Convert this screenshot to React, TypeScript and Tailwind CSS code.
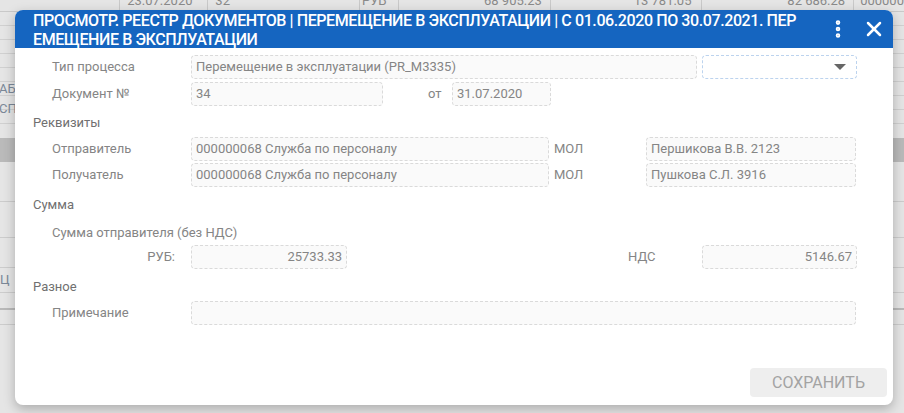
import { MoreVertical, X } from 'lucide-react';

const font = { fontFamily: 'Roboto, "Noto Sans", sans-serif' };

function Field({ w, value, right }: { w: string; value?: string; right?: boolean }) {
  return (
    <div
      className={`${w} h-[24px] shrink-0 rounded-[4px] border border-dashed border-[#dadada] bg-[#fafafa] px-[4px] flex items-center text-[13px] text-[#858585] whitespace-nowrap ${
        right ? 'justify-end' : ''
      }`}
    >
      {value}
    </div>
  );
}

function Label({ children }: { children: React.ReactNode }) {
  return <div className="w-[158px] shrink-0 pl-[19px] text-[13px] text-[#858585]">{children}</div>;
}

function Heading({ children, className = '' }: { children: React.ReactNode; className?: string }) {
  return <div className={`h-[26px] flex items-center text-[13px] text-[#707070] ${className}`}>{children}</div>;
}

function BackgroundTable() {
  const rightRows = [22, 37, 52, 66, 80, 93, 106, 119];
  return (
    <div className="w-full h-full bg-white text-[13px] text-[#9a9a9a]">
      <div className="h-[22px] -mt-[10px] flex items-center border-b border-[#e0e0e0] whitespace-nowrap">
        <div className="w-[123px] h-full border-r border-[#e0e0e0]" />
        <div className="w-[90px] h-full border-r border-[#e0e0e0] pl-[7px] flex items-center">23.07.2020</div>
        <div className="w-[155px] h-full border-r border-[#e0e0e0] pl-[7px] flex items-center">32</div>
        <div className="w-[40px] h-full border-r border-[#e0e0e0] pl-[2px] flex items-center">РУБ</div>
        <div className="w-[155px] h-full border-r border-[#e0e0e0] pr-[8px] flex items-center justify-end">68 905.23</div>
        <div className="w-[155px] h-full border-r border-[#e0e0e0] pr-[10px] flex items-center justify-end">13 781.05</div>
        <div className="w-[155px] h-full border-r border-[#e0e0e0] pr-[8px] flex items-center justify-end">82 686.28</div>
        <div className="pl-[6px] flex items-center">000000</div>
      </div>
      <div>
        {rightRows.map((y) => (
          <div key={y} className="h-[14px] border-b border-[#e8e8e8] flex items-center justify-end pr-[2px] text-[#9aa0a8]">
            <span className="w-[24px]">00</span>
          </div>
        ))}
      </div>
      <div className="h-[14px]" />
      <div className="h-[24px] bg-[#d0d0d0]" />
      <div className="h-[40px] border-b border-[#e4e4e4]" />
      <div className="h-[36px] border-b border-[#e4e4e4]" />
      <div className="h-[30px] border-b border-[#e4e4e4]" />
      <div className="h-[25px] border-b border-[#e4e4e4] flex items-center text-[#8a98aa]">Ц</div>
      <div className="h-[17px] border-b-2 border-[#cfcfcf]" />
      <div className="h-[15px] border-b border-[#e4e4e4]" />
    </div>
  );
}

export default function App() {
  return (
    <div className="relative w-[904px] h-[413px] overflow-hidden" style={font}>
      <BackgroundTable />
      <div className="absolute left-0 top-[79px] text-[13px] leading-[20px] text-[#8a98aa] -ml-[1px]">
        <div>АБ</div>
        <div>СП</div>
      </div>
      <div className="absolute inset-0 bg-black/10" />

      <div className="absolute left-[15px] top-[10px] w-[878px] h-[395px] rounded-[8px] bg-white shadow-[0_4px_12px_rgba(0,0,0,0.25)] flex flex-col overflow-hidden">
        <div className="h-[38px] bg-[#1565c0] flex items-start shrink-0">
          <div className="pl-[18px] pt-[1px] text-white text-[16px] font-medium tracking-[-0.4px] leading-[19px] uppercase flex-1 whitespace-nowrap">
            <div>ПРОСМОТР. РЕЕСТР ДОКУМЕНТОВ | ПЕРЕМЕЩЕНИЕ В ЭКСПЛУАТАЦИИ | С 01.06.2020 ПО 30.07.2021. ПЕР</div>
            <div>ЕМЕЩЕНИЕ В ЭКСПЛУАТАЦИИ</div>
          </div>
          <div className="flex items-center h-full pr-[7px] gap-[13px] text-white">
            <MoreVertical size={22} strokeWidth={3} />
            <X size={24} strokeWidth={2.5} />
          </div>
        </div>

        <div className="px-[18px] pt-[6px] flex flex-col">
          <div className="h-[26px] flex items-center">
            <Label>Тип процесса</Label>
            <Field w="w-[506px]" value="Перемещение в эксплуатации (PR_M3335)" />
            <div className="ml-[5px] w-[155px] h-[24px] rounded-[4px] border border-dashed border-[#bcd3ee] flex items-center justify-end pr-[10px]">
              <svg width="12" height="7" viewBox="0 0 12 7">
                <path d="M0 0 L12 0 L6 6 Z" fill="#666" />
              </svg>
            </div>
          </div>
          <div className="h-[27px] flex items-center">
            <Label>Документ №</Label>
            <Field w="w-[192px]" value="34" />
            <div className="w-[69px] pl-[45px] text-[13px] text-[#858585]">от</div>
            <Field w="w-[99px]" value="31.07.2020" />
          </div>

          <Heading className="mt-[3px]">Реквизиты</Heading>
          <div className="h-[26px] flex items-center">
            <Label>Отправитель</Label>
            <Field w="w-[358px]" value="000000068 Служба по персоналу" />
            <div className="w-[97px] pl-[5px] text-[13px] text-[#858585]">МОЛ</div>
            <Field w="w-[210px]" value="Першикова В.В. 2123" />
          </div>
          <div className="h-[26px] flex items-center">
            <Label>Получатель</Label>
            <Field w="w-[358px]" value="000000068 Служба по персоналу" />
            <div className="w-[97px] pl-[5px] text-[13px] text-[#858585]">МОЛ</div>
            <Field w="w-[210px]" value="Пушкова С.Л. 3916" />
          </div>

          <Heading className="mt-[4px]">Сумма</Heading>
          <div className="mt-[4px] h-[22px] flex items-center pl-[19px] text-[13px] text-[#858585]">
            Сумма отправителя (без НДС)
          </div>
          <div className="h-[26px] flex items-center">
            <div className="w-[158px] shrink-0 pr-[16px] text-right text-[13px] text-[#858585]">РУБ:</div>
            <Field w="w-[156px]" value="25733.33" right />
            <div className="w-[281px] shrink-0" />
            <div className="w-[74px] shrink-0 text-[13px] text-[#858585]">НДС</div>
            <Field w="w-[155px]" value="5146.67" right />
          </div>

          <Heading className="mt-[4px] h-[24px]">Разное</Heading>
          <div className="h-[26px] flex items-center">
            <Label>Примечание</Label>
            <Field w="w-[665px]" />
          </div>
        </div>

        <div className="flex-1" />
        <div className="flex justify-end pr-[6px] pb-[8px]">
          <button className="w-[137px] h-[29px] rounded-[4px] bg-[#eeeeee] text-[#a3a3a3] text-[16px] uppercase">
            Сохранить
          </button>
        </div>
      </div>
    </div>
  );
}
